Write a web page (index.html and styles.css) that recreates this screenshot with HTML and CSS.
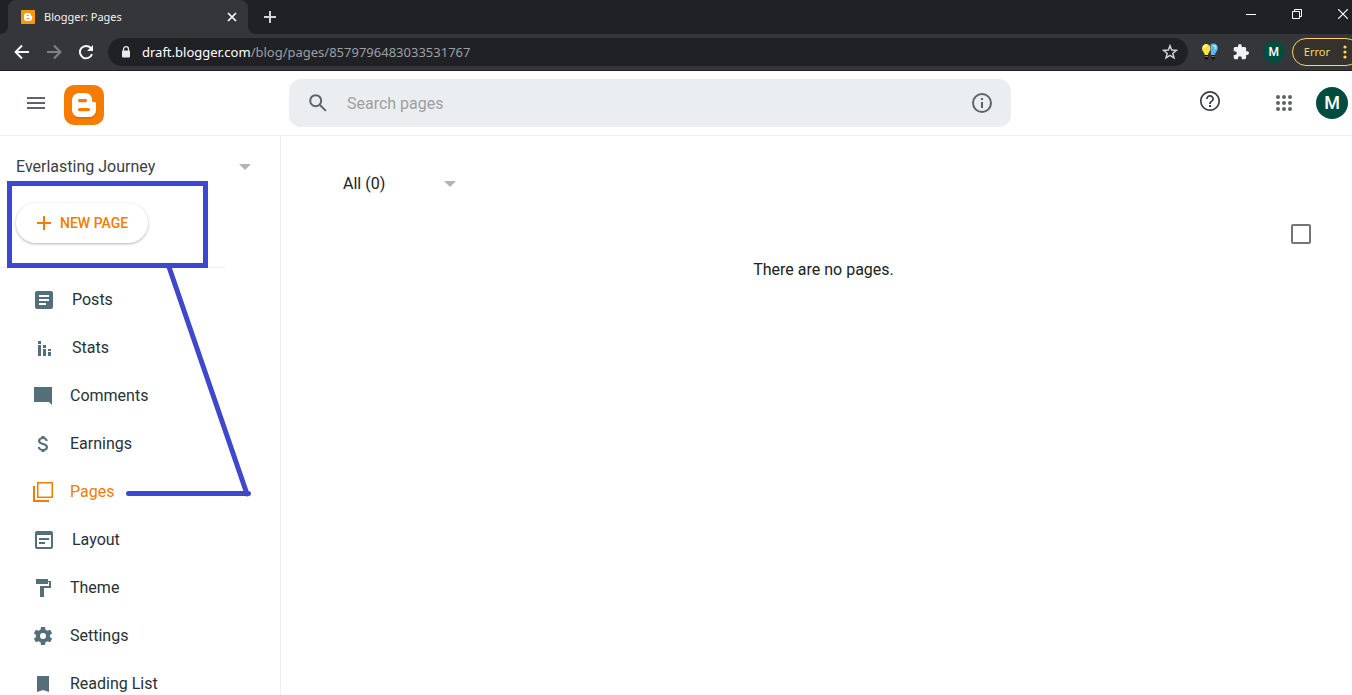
FILE: index.html
```html
<!DOCTYPE html>
<html lang="en">
<head>
<meta charset="utf-8">
<title>Blogger: Pages</title>
<link rel="stylesheet" href="styles.css">
</head>
<body>
<div class="browser">
  <div class="tabstrip">
    <div class="tab">
      <svg class="favicon" viewBox="0 0 16 16" width="16" height="16"><rect x="1" y="1" width="14" height="14" rx="1" fill="#ff9800"/><path fill="#fff" fill-rule="evenodd" d="M6.500 4h2.300C10.200 4 11 5 11 6.200c0 .9.3.8.9.9.300.1.300.3.300.8v1.300C12.200 11 11 12 9.600 12H6.400C5 12 4 11 4 9.600V6.500C4 5 5 4 6.500 4zM6.500 6v1h2.300V6zM6.500 9v1h3.200V9z"/></svg>
      <span class="tab-title">Blogger: Pages</span>
      <button class="chrome-btn tab-close" aria-label="Close tab"><svg viewBox="0 0 10 10" width="10" height="10"><path d="M1 1l8 8M9 1L1 9" stroke="#fff" stroke-width="1.700"/></svg></button>
    </div>
    <button class="chrome-btn new-tab" aria-label="New tab"><svg viewBox="0 0 12 12" width="12" height="12"><path d="M6 0v12M0 6h12" stroke="#d5d6d8" stroke-width="2"/></svg></button>
    <div class="window-buttons">
      <button class="chrome-btn" aria-label="Minimize"><svg viewBox="0 0 10 10" width="10" height="10"><path d="M0 5.500h10" stroke="#fff"/></svg></button>
      <button class="chrome-btn" aria-label="Restore"><svg viewBox="0 0 10 10" width="10" height="10"><path d="M.5 2.500h7v7h-7zM2.500 2.500v-2h7v7h-2" fill="none" stroke="#fff"/></svg></button>
      <button class="chrome-btn" aria-label="Close window"><svg viewBox="0 0 10 10" width="10" height="10"><path d="M0 0l10 10M10 0L0 10" stroke="#fff" stroke-width="1.200"/></svg></button>
    </div>
  </div>
  <div class="toolbar">
    <div class="nav-buttons">
      <button class="chrome-btn" aria-label="Back"><svg viewBox="0 0 16 16" width="16" height="16"><path d="M15 8H2M8 1.500L1.600 8 8 14.500" fill="none" stroke="#f4f5f6" stroke-width="2"/></svg></button>
      <button class="chrome-btn" aria-label="Forward"><svg viewBox="0 0 16 16" width="16" height="16"><path d="M1 8h13M8 1.500L14.400 8 8 14.500" fill="none" stroke="#818285" stroke-width="2"/></svg></button>
      <button class="chrome-btn" aria-label="Reload"><svg viewBox="0 0 16 16" width="16" height="16"><path d="M14 10.200A6.200 6.200 0 1 1 12.800 4" fill="none" stroke="#f4f5f6" stroke-width="2"/><path d="M15 1v6H9z" fill="#f4f5f6"/></svg></button>
    </div>
    <div class="address">
      <svg viewBox="0 0 10 12" width="10" height="12"><path d="M2.500 5V3.200a2.500 2.500 0 0 1 5 0V5" fill="none" stroke="#e8eaed" stroke-width="1.300"/><rect x="1" y="4.500" width="8" height="7" rx="1" fill="#e8eaed"/></svg>
      <span class="url"><span class="host">draft.blogger.com</span>/blog/pages/8579796483033531767</span>
      <button class="chrome-btn" aria-label="Bookmark this page"><svg viewBox="0 0 16 16" width="16" height="16"><path d="M8 1.800l1.700 4.300 4.700.3-3.600 3 1.200 4.500L8 11.400l-4 2.500 1.200-4.500-3.600-3 4.700-.3z" fill="none" stroke="#cfd1d4" stroke-width="1.500"/></svg></button>
    </div>
    <div class="extensions">
      <button class="chrome-btn" aria-label="Light bulbs extension"><svg viewBox="0 0 18 18" width="18" height="18"><path d="M9.500 1.500c4-2.500 8 .5 7.200 4.500-.5 2.500-2.500 3.500-2.700 6h-4z" fill="#59b9f2"/><path d="M12 3c2-1 4 1 2 3" fill="none" stroke="#b8e6ff" stroke-width="1.500"/><path d="M1 5.500C1-.5 9.500-.5 9.500 5.500 9.500 8.500 7.300 9 7 12H3.800C3.500 9 1 8.500 1 5.500z" fill="#ffe23e"/><path d="M3 5c0-2 1.500-3 3-2.500" fill="none" stroke="#fffbc2" stroke-width="1.500"/><path d="M3.800 12h3.400v3.500L5.500 17l-1.700-1.500zM10.500 12h3.400v3.500L12.200 17l-1.700-1.500z" fill="#17130c"/><path d="M4 13.500h3M10.700 13.500h3" stroke="#8b7045"/></svg></button>
      <button class="chrome-btn" aria-label="Extensions"><svg viewBox="1 1 22 22" width="16" height="16"><path fill="#f1f3f4" d="M20.500 11H19V7c0-1.100-.9-2-2-2h-4V3.500a2.500 2.500 0 0 0-5 0V5H4c-1.100 0-2 .9-2 2v3.800h1.500a2.700 2.700 0 0 1 0 5.400H2V20c0 1.100.9 2 2 2h3.800v-1.500a2.700 2.700 0 0 1 5.400 0V22H17c1.100 0 2-.9 2-2v-4h1.500a2.500 2.500 0 0 0 0-5z"/></svg></button>
      <button class="chrome-btn profile" aria-label="Profile M">M</button>
    </div>
    <button class="error-button">Error<svg viewBox="0 0 4 14" width="4" height="14"><g fill="#fdd663"><circle cx="2" cy="2" r="1.600"/><circle cx="2" cy="7" r="1.600"/><circle cx="2" cy="12" r="1.600"/></g></svg></button>
  </div>
</div>

<header class="header">
  <div class="brand">
    <button class="icon-btn" aria-label="Main menu"><svg viewBox="0 0 18 12" width="18" height="12"><path d="M0 1h18M0 6h18M0 11h18" stroke="#5f6368" stroke-width="2"/></svg></button>
    <a class="logo" href="#" aria-label="Blogger"><svg viewBox="0 0 40 40" width="40" height="40"><rect width="40" height="40" rx="10" fill="#f57c00"/><path d="M9 27c1 4 3.500 6 7 6h9c4 0 7-3 7-7" fill="none" stroke="#cc6200" stroke-width="1"/><path fill="#fff" fill-rule="evenodd" d="M15.500 8H21c4.500 0 7 3.200 7 7 0 2 .7 2 2.500 2.100 1 .1 1.500.6 1.500 1.600V25c0 4.300-3 7-7 7h-9.500C11 32 8 29 8 24.500v-9C8 11 11 8 15.500 8zM15.500 14a1.600 1.600 0 0 0 0 3.200h6a1.600 1.600 0 0 0 0-3.200zM15.500 23a1.600 1.600 0 0 0 0 3.200h9a1.600 1.600 0 0 0 0-3.200z"/></svg></a>
  </div>
  <form class="search" role="search">
    <svg viewBox="0 0 18 18" width="18" height="18"><g fill="none" stroke="#5f6368" stroke-width="2"><circle cx="6.700" cy="6.700" r="5.500"/><path d="M10.700 10.700l6.200 6.200"/></g></svg>
    <input type="search" aria-label="Search pages" placeholder="Search pages">
    <button type="button" class="icon-btn" aria-label="Search help"><svg viewBox="0 0 20 20" width="20" height="20"><circle cx="10" cy="10" r="9" fill="none" stroke="#5f6368" stroke-width="2"/><path d="M9 9h2v6H9zM9 5h2v2H9z" fill="#5f6368"/></svg></button>
  </form>
  <div class="account">
    <button class="icon-btn help" aria-label="Help"><svg viewBox="2 2 20 20" width="20" height="20"><path fill="#3c4043" d="M11 18h2v-2h-2v2zm1-16C6.480 2 2 6.480 2 12s4.480 10 10 10 10-4.480 10-10S17.520 2 12 2zm0 18.300c-4.600 0-8.300-3.700-8.300-8.300S7.400 3.700 12 3.700s8.300 3.700 8.300 8.300-3.700 8.300-8.300 8.300zM12 6c-2.210 0-4 1.790-4 4h1.800c0-1.300 1-2.200 2.200-2.200s2.200.9 2.200 2.200c0 2-3.100 1.800-3.100 5h1.800c0-2.200 3.100-2.500 3.100-5 0-2.210-1.790-4-4-4z"/></svg></button>
    <button class="icon-btn" aria-label="Google apps"><svg viewBox="0 0 16 16" width="16" height="16"><g fill="#5f6368"><circle cx="2" cy="2" r="2"/><circle cx="8" cy="2" r="2"/><circle cx="14" cy="2" r="2"/><circle cx="2" cy="8" r="2"/><circle cx="8" cy="8" r="2"/><circle cx="14" cy="8" r="2"/><circle cx="2" cy="14" r="2"/><circle cx="8" cy="14" r="2"/><circle cx="14" cy="14" r="2"/></g></svg></button>
    <button class="avatar" aria-label="Account M">M</button>
  </div>
</header>

<div class="workspace">
  <aside class="sidebar">
    <div class="picker blog-picker">
      <select aria-label="Blog"><option>Everlasting Journey</option></select>
      <svg viewBox="0 0 12 6" width="12" height="6"><path d="M0 0h12L6 6z" fill="#b3b3b3"/></svg>
    </div>
    <div class="create">
      <button class="new-page"><svg viewBox="0 0 14 14" width="14" height="14"><path d="M7 0v14M0 7h14" stroke="#f57c00" stroke-width="2"/></svg>NEW PAGE</button>
    </div>
    <nav class="menu">
      <a class="inset" href="#"><svg viewBox="0 0 24 24"><path d="M19 3H5c-1.100 0-2 .9-2 2v14c0 1.100.9 2 2 2h14c1.100 0 2-.9 2-2V5c0-1.100-.9-2-2-2zm-5 14H7v-2h7v2zm3-4H7v-2h10v2zm0-4H7V7h10v2z"/></svg>Posts</a>
      <a class="inset" href="#"><svg viewBox="0 0 24 24"><path d="M6 9h3v11H6zM6 5h3v3H6zM11 13h3v7h-3zM11 9h3v3h-3zM16 16h3v4h-3zM16 13h3v2h-3z"/></svg>Stats</a>
      <a href="#"><svg viewBox="0 0 24 24"><path d="M21 3H3v15h15l3 3z"/></svg>Comments</a>
      <a href="#"><svg viewBox="0 0 24 24"><path d="M12.300 10.900c-2.270-.59-3-1.200-3-2.150 0-1.090 1.010-1.850 2.700-1.850 1.780 0 2.440.85 2.500 2.100h2.210c-.07-1.720-1.120-3.300-3.210-3.810V4h-3v1.160c-1.940.42-3.500 1.680-3.500 3.610 0 2.310 1.910 3.460 4.700 4.130 2.500.6 3 1.480 3 2.410 0 .69-.49 1.790-2.700 1.790-2.060 0-2.870-.92-2.980-2.100H6.820c.12 2.190 1.760 3.420 3.680 3.830V20h3v-1.150c1.950-.37 3.500-1.500 3.500-3.550 0-2.840-2.430-3.810-4.700-4.400z"/></svg>Earnings</a>
      <a class="active" aria-current="page" href="#"><svg viewBox="0 0 24 24"><path d="M6 2h16v16H6zm1.500 1.500v13h13v-13zM2 6h2v14h14v2H2z" fill-rule="evenodd"/></svg>Pages</a>
      <a class="inset" href="#"><svg viewBox="0 0 24 24"><path fill-rule="evenodd" d="M5 3h14a2 2 0 0 1 2 2v14a2 2 0 0 1-2 2H5a2 2 0 0 1-2-2V5a2 2 0 0 1 2-2zm0 4v12h14V7zM7 10h10v2H7zM7 14h6v2H7z"/></svg>Layout</a>
      <a href="#"><svg viewBox="0 0 24 24"><path d="M5 3h12v2h3v7h-7v9H9V10h9V6h-1v2H5z"/></svg>Theme</a>
      <a href="#"><svg viewBox="0 0 24 24"><path fill-rule="evenodd" d="M10 3h4l.5 2.700 2 1.100 2.600-1 2 3.500-2.200 1.700v2l2.200 1.700-2 3.500-2.600-1-2 1.100L14 21h-4l-.5-2.700-2-1.100-2.600 1-2-3.500L5.100 13v-2L2.900 9.300l2-3.500 2.600 1 2-1.100zM12 9a3 3 0 1 0 0 6 3 3 0 0 0 0-6z"/></svg>Settings</a>
      <a href="#"><svg viewBox="0 0 24 24"><path d="M6 4h12v16l-6-2-6 2z"/></svg>Reading List</a>
    </nav>
  </aside>
  <main class="content">
    <div class="picker filter">
      <select aria-label="Filter pages"><option>All (0)</option></select>
      <svg viewBox="0 0 12 6" width="12" height="6"><path d="M0 0h12L6 6z" fill="#b3b3b3"/></svg>
    </div>
    <div class="bulk"><input type="checkbox" aria-label="Select all pages"></div>
    <p class="empty">There are no pages.</p>
  </main>
  <svg class="annotation" viewBox="0 0 280 400" width="280" height="400" aria-hidden="true"><g fill="none" stroke="#3f48cc" stroke-width="5"><path d="M9.500 47.500h196v82h-196z"/><path d="M169 131l78 227M128.500 357.500h120" stroke-linecap="round"/></g></svg>
</div>
</body>
</html>
```

FILE: styles.css
```css
* { box-sizing: border-box; }
body {
  margin: 0;
  height: 100vh;
  display: flex;
  flex-direction: column;
  overflow: hidden;
  background: #fff;
  color: #202124;
  font: 16px/24px Roboto, sans-serif;
}
button, input, select { font: inherit; color: inherit; margin: 0; }
button { border: 0; padding: 0; background: none; }
svg { display: block; flex: none; }

/* Browser frame */
.browser {
  flex: none;
  background: #35363a;
  border-bottom: 1px solid #231f20;
  font: 14px/20px "Noto Sans", sans-serif;
  overflow: hidden;
}
.chrome-btn { display: flex; align-items: center; justify-content: center; }
.tabstrip {
  display: flex;
  align-items: center;
  height: 34px;
  padding: 0 4px 0 8px;
  background: #202124;
}
.tab {
  position: relative;
  display: flex;
  align-items: center;
  gap: 8px;
  width: 240px;
  height: 34px;
  padding: 0 11px 0 12px;
  background: #35363a;
  border-radius: 8px 8px 0 0;
}
.tab::before, .tab::after {
  content: "";
  position: absolute;
  bottom: 0;
  width: 8px;
  height: 8px;
}
.tab::before { left: -8px; background: radial-gradient(circle at 0 0, #202124 8px, #35363a 8px); }
.tab::after { right: -8px; background: radial-gradient(circle at 100% 0, #202124 8px, #35363a 8px); }
.tab-title { flex: 1; color: #f1f3f4; font-size: 11px; }
.new-tab { margin-left: 16px; }
.window-buttons { display: flex; gap: 36px; margin-left: auto; padding-bottom: 6px; }
.toolbar { display: flex; align-items: center; height: 36px; padding-left: 14px; }
.nav-buttons { display: flex; gap: 16px; margin-right: 14px; }
.address {
  flex: 1;
  display: flex;
  align-items: center;
  height: 28px;
  padding: 0 10px 0 13px;
  border-radius: 14px;
  background: #202124;
}
.url { flex: 1; margin-left: 11px; color: #9aa0a6; font-size: 13px; }
.host { color: #fff; }
.extensions { display: flex; align-items: center; gap: 14px; margin: 0 7px 0 13px; }
.profile {
  width: 22px;
  height: 22px;
  border-radius: 50%;
  background: #004d40;
  color: #fff;
  font: 500 12px/22px Roboto, sans-serif;
}
.error-button {
  flex: none;
  display: flex;
  align-items: center;
  gap: 13px;
  height: 28px;
  margin-right: -8px;
  padding: 0 12px 0 11px;
  border: 1px solid #fdd663;
  border-radius: 14px;
  background: #35312c;
  color: #fdd663;
  font-size: 11px;
}

/* Application header */
.header {
  flex: none;
  display: flex;
  align-items: center;
  height: 65px;
  border-bottom: 1px solid #eceeef;
}
.icon-btn { display: flex; }
.brand { flex: none; display: flex; align-items: center; gap: 19px; width: 289px; padding-left: 27px; }
.logo { margin-top: 4px; }
.search {
  flex: 0 1 722px;
  display: flex;
  align-items: center;
  gap: 20px;
  height: 48px;
  padding: 0 19px 0 20px;
  border-radius: 12px;
  background: #ebeef1;
}
.search input {
  flex: 1;
  min-width: 0;
  padding: 2px 0 0;
  border: 0;
  outline: 0;
  background: none;
}
.search input::placeholder { color: #9e9e9e; opacity: 1; }
.account { display: flex; align-items: center; gap: 24px; margin-left: auto; padding: 0 4px 0 16px; }
.help { margin: 0 32px 4px 0; }
.avatar {
  width: 32px;
  height: 32px;
  border-radius: 50%;
  background: #004d40;
  color: #fff;
  font: 500 18px/32px Roboto, sans-serif;
}

/* Sidebar */
.workspace { flex: 1; min-height: 0; display: flex; position: relative; }
.sidebar { flex: none; width: 281px; overflow: hidden; border-right: 1px solid #eceeef; }
.picker { display: grid; align-items: center; }
.picker select {
  grid-area: 1 / 1;
  height: 24px;
  padding: 0;
  border: 0;
  appearance: none;
  background: none;
}
.picker svg { grid-area: 1 / 1; justify-self: end; pointer-events: none; }
.blog-picker { padding: 19px 29px 0 16px; color: #3c4043; }
.create { width: 225px; padding: 24px 16px; border-bottom: 1px solid #eceeef; }
.new-page {
  display: flex;
  align-items: center;
  gap: 9px;
  height: 40px;
  padding: 0 20px 0 21px;
  border-radius: 20px;
  background: #fff;
  box-shadow: 0 1px 3px rgba(0, 0, 0, .3);
  color: #f57c00;
  font-size: 14px;
  font-weight: 500;
}
.menu { display: flex; flex-direction: column; padding-top: 8px; }
.menu a {
  display: flex;
  align-items: center;
  gap: 15px;
  height: 48px;
  padding-left: 31px;
  color: #263238;
  text-decoration: none;
}
.menu svg { width: 24px; height: 24px; fill: #546e7a; }
.menu .inset { padding-left: 32px; gap: 16px; }
.menu .active { color: #f57c00; }
.menu .active svg { fill: #f57c00; }

/* Page list */
.content { flex: 1; min-width: 0; padding: 36px 36px 0 50px; }
.filter { width: 125px; padding-left: 12px; }
.bulk { display: flex; justify-content: flex-end; padding: 28px 5px 0 0; }
.bulk input {
  appearance: none;
  width: 20px;
  height: 20px;
  border: 2px solid #757575;
  border-radius: 2px;
}
.empty { margin: 14px 0 0; text-align: center; }
.annotation { position: absolute; left: 0; top: 0; pointer-events: none; }
```
